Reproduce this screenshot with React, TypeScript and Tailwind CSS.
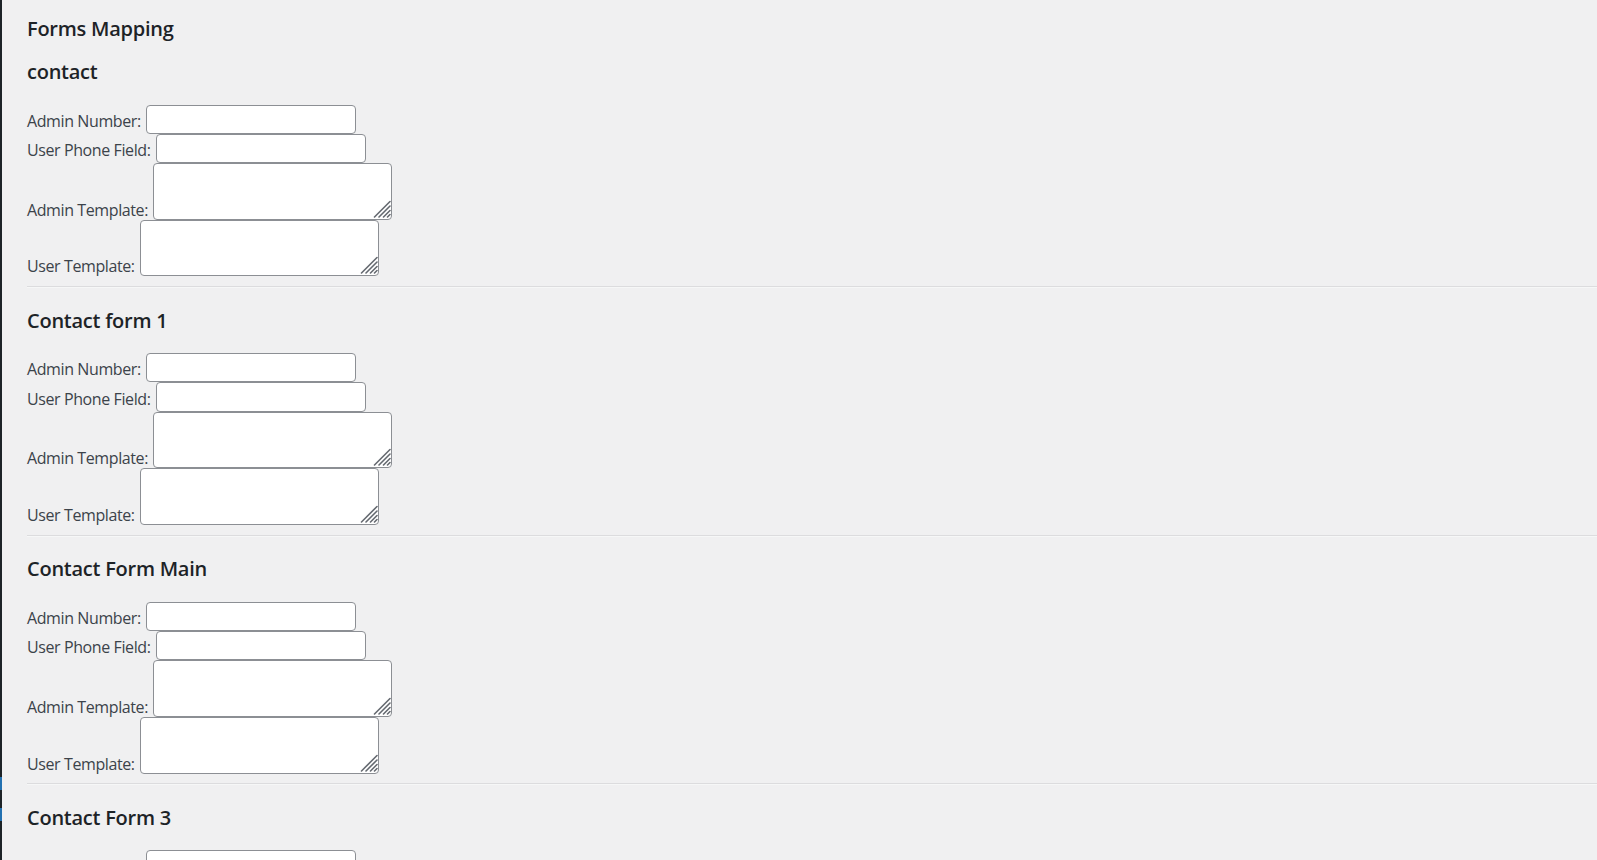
import React from 'react'

const FORMS = ['contact', 'Contact form 1', 'Contact Form Main', 'Contact Form 3']

const FIELDS: { label: string; multiline: boolean }[] = [
  { label: 'Admin Number:', multiline: false },
  { label: 'User Phone Field:', multiline: false },
  { label: 'Admin Template:', multiline: true },
  { label: 'User Template:', multiline: true },
]

// resize grip drawn like the Windows one in the screenshot
function Grip() {
  return (
    <svg
      className="pointer-events-none absolute bottom-[2px] right-[1px] h-[18px] w-[18px]"
      viewBox="0 0 18 18"
      fill="none"
      stroke="#646970"
      strokeWidth="1.6"
      strokeLinecap="round"
    >
      <path d="M1.5 17 L17 1.5" />
      <path d="M6 17 L17 6" />
      <path d="M10.5 17 L17 10.5" />
      <path d="M14.5 17 L17 14.5" />
    </svg>
  )
}

function Field({ label, multiline }: { label: string; multiline: boolean }) {
  return (
    <div className="flex items-end gap-[5px]">
      <label className={multiline ? 'leading-[20px] pb-0' : 'leading-[20px] pb-[3px]'}>{label}</label>
      {multiline ? (
        <div className="relative">
          <textarea
            rows={2}
            className="block h-[56.67px] w-[239.33px] resize-none rounded-[4px] border border-[#8c8f94] bg-white px-2 py-1 outline-none"
          />
          <Grip />
        </div>
      ) : (
        <input
          type="text"
          className="block h-[29.33px] w-[210.67px] rounded-[4px] border border-[#8c8f94] bg-white px-2 outline-none"
        />
      )}
    </div>
  )
}

export default function App() {
  return (
    <div
      className="flex h-[860px] overflow-hidden bg-[#f0f0f1] text-[16px] tracking-[-0.4px] text-[#3c434a]"
      style={{ fontFamily: '"Open Sans", "Noto Sans", sans-serif' }}
    >
      {/* admin menu edge */}
      <div className="flex w-[2px] shrink-0 flex-col">
        <div className="h-[777px] bg-[#1d2327]" />
        <div className="h-[13px] bg-[#2271b1]" />
        <div className="h-[18px] bg-[#1d2327]" />
        <div className="h-[13px] bg-[#2271b1]" />
        <div className="flex-1 bg-[#1d2327]" />
      </div>

      <main className="flex-1 pl-[25px]">
        <h1 className="pt-[15px] text-[20px] font-semibold leading-[28px] tracking-[-0.25px] text-[#1d2327]">
          Forms Mapping
        </h1>

        {FORMS.map((name, i) => (
          <section key={name} className={i === 0 ? 'pt-[15px]' : 'pt-[18.5px]'}>
            <h2 className="text-[20px] font-semibold leading-[28px] tracking-[-0.25px] text-[#1d2327]">{name}</h2>
            <div className="mt-[18.5px] flex flex-col">
              {FIELDS.map((f) => (
                <Field key={f.label} label={f.label} multiline={f.multiline} />
              ))}
            </div>
            <hr className="mt-[9.7px] border-t border-b border-t-[#dcdcde] border-b-[#f6f7f7]" />
          </section>
        ))}
      </main>
    </div>
  )
}
